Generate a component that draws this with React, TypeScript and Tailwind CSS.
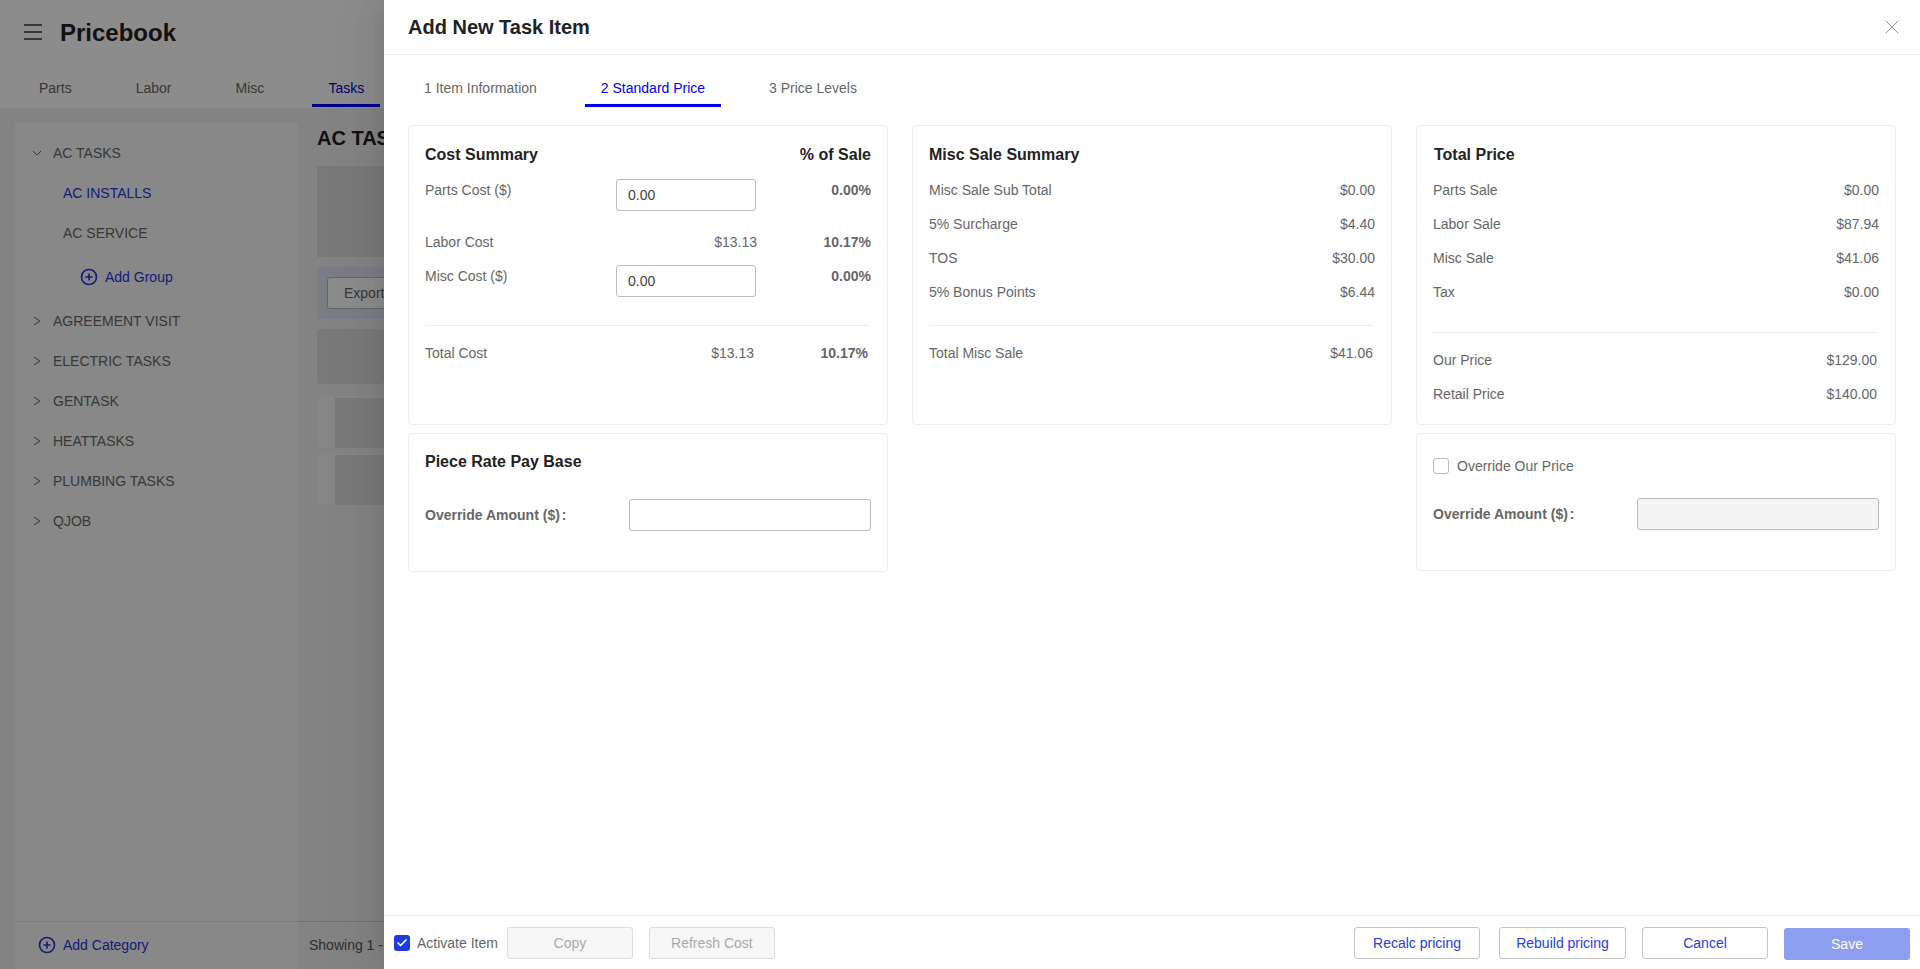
import React from 'react';
import { CirclePlus, X, Check } from 'lucide-react';

const sans = "font-['Liberation_Sans',Arial,sans-serif]";

const categories = ['AGREEMENT VISIT', 'ELECTRIC TASKS', 'GENTASK', 'HEATTASKS', 'PLUMBING TASKS', 'QJOB'];

const Row = ({ label, value }: { label: string; value: string }) => (
  <div className="flex h-[34px] items-center justify-between text-sm text-[#666]">
    <span>{label}</span>
    <span>{value}</span>
  </div>
);

const Card = ({ className, children }: { className?: string; children: React.ReactNode }) => (
  <div className={`w-[480px] rounded border border-[#eceef0] bg-white ${className ?? ''}`}>{children}</div>
);

const FooterButton = ({ className, children }: { className: string; children: React.ReactNode }) => (
  <button className={`h-8 rounded-[3px] text-sm ${className}`}>{children}</button>
);

const CostRow = ({ label, amount, pct, input }: { label: string; amount?: string; pct: string; input?: boolean }) => (
  <div className="flex items-start text-sm leading-4 text-[#666]">
    <span className="mt-[3px] w-[191px]">{label}</span>
    {input ? (
      <div className="flex h-8 w-[140px] items-center rounded-[3px] border border-[#bcbcbc] px-[11px] text-[#444]">0.00</div>
    ) : (
      <span className="mt-[3px] w-[141px] text-right">{amount}</span>
    )}
    <span className="mt-[3px] flex-1 text-right font-bold">{pct}</span>
  </div>
);

const OverrideLabel = () => (
  <span className="text-sm font-bold text-[#666]">
    Override Amount ($)<span className="ml-[2px]">:</span>
  </span>
);

const ArrowDown = () => (
  <svg width="10" height="10" viewBox="0 0 10 10" fill="none" stroke="currentColor" strokeWidth="1" className="mr-[11px]">
    <path d="M1 3l4 4 4-4" />
  </svg>
);

const ArrowRight = () => (
  <svg width="10" height="10" viewBox="0 0 10 10" fill="none" stroke="currentColor" strokeWidth="1" className="mr-[11px]">
    <path d="M2 1l6 4-6 4" />
  </svg>
);

const App = () => {
  return (
    <div className={`relative flex h-[969px] w-[1920px] overflow-hidden bg-white ${sans}`}>
      {/* page behind the drawer */}
      <div className="flex h-full w-[384px] flex-col">
        <div className="flex h-[65px] shrink-0 items-center pl-6">
          <svg width="18" height="16" viewBox="0 0 18 16" stroke="#333" strokeWidth="1.5" className="mt-[-1px]">
            <path d="M0 1h18M0 8h18M0 15h18" />
          </svg>
          <span className="ml-[18px] text-2xl font-bold text-[#222]">Pricebook</span>
        </div>
        <div className="flex h-[43px] shrink-0 items-start text-sm text-[#666]">
          <span className="ml-[39px] mt-[13px]">Parts</span>
          <span className="ml-[64px] mt-[13px]">Labor</span>
          <span className="ml-[64px] mt-[13px]">Misc</span>
          <div className="ml-[48px] flex h-[42px] w-[68px] flex-col items-center justify-between">
            <span className="mt-[13px] text-[#0000cc]">Tasks</span>
            <div className="h-[3px] w-full bg-[#0000ff]" />
          </div>
        </div>
        <div className="flex min-h-0 flex-1 bg-[#eeeeee] pl-[15px] pt-[15px]">
          <div className="flex w-[283px] flex-col bg-[#f8f8f8] text-sm text-[#666]">
            <div className="mt-[10px] flex h-10 items-center pl-[17px]">
              <ArrowDown />
              AC TASKS
            </div>
            <div className="flex h-10 items-center pl-[48px] text-[#2a35d8]">AC INSTALLS</div>
            <div className="flex h-10 items-center pl-[48px]">AC SERVICE</div>
            <div className="flex h-[48px] items-center pl-[65px] text-[#2a35d8]">
              <CirclePlus size={18} strokeWidth={2.2} className="mr-[7px]" />
              Add Group
            </div>
            {categories.map((name) => (
              <div key={name} className="flex h-10 items-center pl-[17px]">
                <ArrowRight />
                {name}
              </div>
            ))}
            <div className="mt-auto flex h-[48px] items-center border-t border-[#e4e4e4] pb-[1px] pl-[23px] text-[#2a35d8]">
              <CirclePlus size={18} strokeWidth={2.2} className="mr-[7px]" />
              Add Category
            </div>
          </div>
          <div className="flex min-w-0 flex-1 flex-col pl-[19px]">
            <div className="mt-[1px] whitespace-nowrap text-xl font-bold text-[#222]">AC TASKS</div>
            <div className="mt-[14px] h-[91px] bg-[#dddddd]" />
            <div className="mt-[10px] h-[52px] rounded-t bg-[#dfe4f4] pl-[10px] pt-[10px]">
              <div className="flex h-8 w-[80px] items-center rounded-[3px] border border-[#bcbcbc] bg-white pl-4 text-sm text-[#666]">Export</div>
            </div>
            <div className="mt-[10px] h-[55px] rounded bg-[#dddddd]" />
            <div className="mt-[12px] h-[52px] rounded bg-[#f4f4f4] pl-[18px] pt-[2px]"><div className="h-[50px] bg-[#dddddd]" /></div>
            <div className="mt-[5px] h-[52px] rounded bg-[#f4f4f4] pl-[18px] pt-[2px]"><div className="h-[50px] bg-[#dddddd]" /></div>
            <div className="ml-[-19px] mt-auto flex h-[48px] items-center whitespace-nowrap border-t border-[#cfcfcf] pb-[2px] pl-[11px] text-sm text-[#555]">Showing 1 - 2</div>
          </div>
        </div>
      </div>

      {/* backdrop */}
      <div className="absolute inset-0 bg-black/45" />

      {/* drawer */}
      <div className="absolute inset-y-0 right-0 flex w-[1536px] flex-col bg-white shadow-[-6px_0_16px_-8px_rgba(0,0,0,0.08),-9px_0_28px_0_rgba(0,0,0,0.05),-12px_0_48px_16px_rgba(0,0,0,0.03)]">
        <div className="flex h-[55px] shrink-0 items-center justify-between border-b border-[#eeeeee] pl-6 pr-4">
          <span className="text-xl font-bold text-[#222]">Add New Task Item</span>
          <X size={24} strokeWidth={1} className="text-[#999]" />
        </div>

        <div className="flex h-[52px] shrink-0 items-start pl-6 text-sm text-[#666]">
          <div className="flex h-full w-[177px] items-start pl-4 pt-[23px]">1 Item Information</div>
          <div className="relative flex h-full w-[136px] justify-center pt-[23px] text-[#0000ff]">
            2 Standard Price
            <div className="absolute bottom-0 left-0 right-0 h-[3px] bg-[#0000ff]" />
          </div>
          <div className="ml-12 pt-[23px]">3 Price Levels</div>
        </div>

        <div className="flex flex-1 gap-6 pl-6 pt-[18px]">
          <div className="flex flex-col gap-2">
            <Card className="h-[300px] px-4 pt-[17px]">
              <div className="flex justify-between text-base font-bold text-[#222]">
                <span>Cost Summary</span>
                <span>% of Sale</span>
              </div>
              <div className="mt-[12px] flex flex-col">
                <CostRow label="Parts Cost ($)" pct="0.00%" input />
                <div className="mt-5"><CostRow label="Labor Cost" amount="$13.13" pct="10.17%" /></div>
                <div className="mt-[15px]"><CostRow label="Misc Cost ($)" pct="0.00%" input /></div>
              </div>
              <div className="mr-[2px] mt-[28px] border-t border-[#eeeeee]" />
              <div className="mt-[19px] flex items-center pr-[3px] text-sm leading-4 text-[#666]">
                <span className="w-[191px]">Total Cost</span>
                <span className="w-[138px] text-right">$13.13</span>
                <span className="flex-1 text-right font-bold">10.17%</span>
              </div>
            </Card>
            <Card className="h-[139px] px-4 pt-4">
              <div className="text-base font-bold text-[#222]">Piece Rate Pay Base</div>
              <div className="mt-[25px] flex items-center justify-between">
                <OverrideLabel />
                <div className="h-8 w-[242px] rounded-[3px] border border-[#bcbcbc]" />
              </div>
            </Card>
          </div>

          <Card className="h-[300px] px-4 pt-[17px]">
            <div className="text-base font-bold text-[#222]">Misc Sale Summary</div>
            <div className="mt-[6px]">
              <Row label="Misc Sale Sub Total" value="$0.00" />
              <Row label="5% Surcharge" value="$4.40" />
              <Row label="TOS" value="$30.00" />
              <Row label="5% Bonus Points" value="$6.44" />
            </div>
            <div className="mr-[2px] mt-4 border-t border-[#eeeeee]" />
            <div className="mt-[10px] pr-[2px]"><Row label="Total Misc Sale" value="$41.06" /></div>
          </Card>

          <div className="flex flex-col gap-2">
            <Card className="h-[300px] px-4 pt-[17px]">
              <div className="pl-[1px] text-base font-bold text-[#222]">Total Price</div>
              <div className="mt-[6px]">
                <Row label="Parts Sale" value="$0.00" />
                <Row label="Labor Sale" value="$87.94" />
                <Row label="Misc Sale" value="$41.06" />
                <Row label="Tax" value="$0.00" />
              </div>
              <div className="mr-[2px] mt-[23px] border-t border-[#eeeeee]" />
              <div className="mt-[10px] pr-[2px]">
                <Row label="Our Price" value="$129.00" />
                <Row label="Retail Price" value="$140.00" />
              </div>
            </Card>
            <Card className="h-[138px] px-4 pt-[22px]">
              <div className="flex items-center text-sm text-[#666]">
                <div className="mr-2 h-4 w-4 rounded-[3px] border border-[#bcbcbc]" />
                Override Our Price
              </div>
              <div className="mt-[22px] flex items-center justify-between">
                <OverrideLabel />
                <div className="h-8 w-[242px] rounded-[3px] border border-[#bcbcbc] bg-[#f4f4f4]" />
              </div>
            </Card>
          </div>
        </div>

        <div className="flex h-[54px] shrink-0 items-center justify-between border-t border-[#eeeeee] pl-[10px] pr-[10px]">
          <div className="flex items-center">
            <div className="mr-[7px] flex h-4 w-4 items-center justify-center rounded-[3px] bg-[#1d3be0]">
              <Check size={12} strokeWidth={3.5} className="text-white" />
            </div>
            <span className="mr-[9px] text-sm text-[#666]">Activate Item</span>
            <FooterButton className="mr-4 w-[126px] border border-[#dcdcdc] bg-[#f7f7f7] text-[#aaa]">Copy</FooterButton>
            <FooterButton className="w-[126px] border border-[#dcdcdc] bg-[#f7f7f7] text-[#aaa]">Refresh Cost</FooterButton>
          </div>
          <div className="flex items-center">
            <FooterButton className="mr-[19px] w-[126px] border border-[#c4c4c4] text-[#2a3ce8]">Recalc pricing</FooterButton>
            <FooterButton className="mr-4 w-[127px] border border-[#c4c4c4] text-[#2a3ce8]">Rebuild pricing</FooterButton>
            <FooterButton className="mr-4 w-[126px] border border-[#c4c4c4] text-[#2a3ce8]">Cancel</FooterButton>
            <FooterButton className="mt-[2px] w-[126px] bg-[#8e9ef0] text-white">Save</FooterButton>
          </div>
        </div>
      </div>
    </div>
  );
};

export default App;
